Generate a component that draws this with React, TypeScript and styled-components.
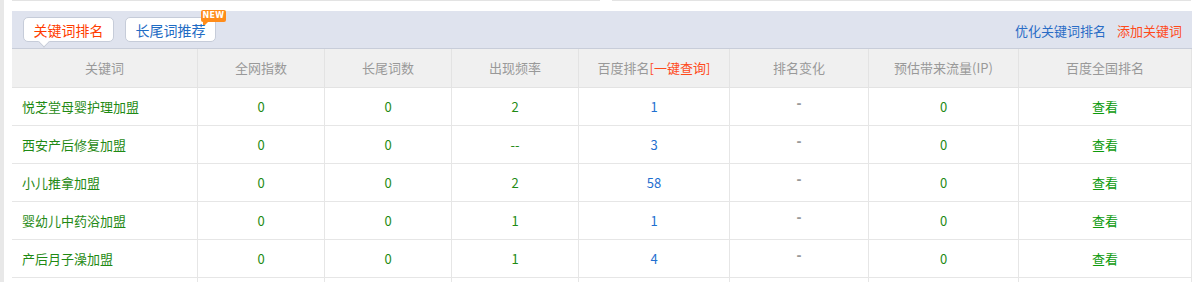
import React from "react";
import styled, { createGlobalStyle } from "styled-components";

const Global = createGlobalStyle`
  html, body { margin: 0; padding: 0; background: #fff; }
  body { font-family: "Noto Sans CJK SC", "Noto Sans", sans-serif; font-size: 13px; }
`;

const Page = styled.div`
  display: flex;
  height: 282px;
  overflow: hidden;
`;

const SideStripe = styled.div`
  width: 4px;
  background: #e8e8e8;
  flex: none;
`;

const Main = styled.div`
  padding-left: 8px;
  width: 1180px;
`;

const TopLines = styled.div`
  display: flex;
  gap: 12px;
  height: 1px;
  margin-bottom: 10px;
`;

const TopLine = styled.div<{ $w: number }>`
  width: ${(p) => p.$w}px;
  background: #e3e3e3;
`;

const Panel = styled.div`
  width: 1180px;
`;

const Bar = styled.div`
  background: #dfe3ee;
  border-bottom: 1px solid #c8cdd9;
  display: flex;
  align-items: flex-start;
  justify-content: space-between;
  padding: 6px 10px 0 11px;
  height: 31px;
`;

const Tabs = styled.div`
  display: flex;
  gap: 11px;
`;

const Tab = styled.div<{ $active?: boolean }>`
  position: relative;
  width: 91px;
  height: 25px;
  box-sizing: border-box;
  background: #fff;
  border: 1px solid #c6ccd9;
  border-radius: 5px;
  display: flex;
  align-items: center;
  justify-content: center;
  font-size: 14px;
  color: ${(p) => (p.$active ? "#ff3c00" : "#1f6cc4")};
  ${(p) =>
    p.$active &&
    `
    &::after {
      content: "";
      position: absolute;
      left: 16px;
      bottom: -5px;
      width: 7px;
      height: 7px;
      background: #fff;
      border-right: 1px solid #c6ccd9;
      border-bottom: 1px solid #c6ccd9;
      transform: rotate(45deg);
    }
  `}
`;

const NewBadge = styled.span`
  position: absolute;
  left: 75px;
  top: -8px;
  width: 25px;
  height: 12px;
  background: #ff8c1a;
  border-radius: 2px;
  color: #fff;
  font-family: "DejaVu Sans", sans-serif;
  font-weight: bold;
  font-size: 8px;
  line-height: 12px;
  text-align: center;
  letter-spacing: 0.3px;
  &::after {
    content: "";
    position: absolute;
    left: 2px;
    bottom: -3px;
    border-left: 2px solid #ff8c1a;
    border-right: 3px solid transparent;
    border-top: 3px solid #ff8c1a;
  }
`;

const Links = styled.div`
  display: flex;
  gap: 11px;
  padding-top: 4px;
  font-size: 13px;
`;

const Link = styled.a<{ $red?: boolean }>`
  color: ${(p) => (p.$red ? "#ff4a1a" : "#2a6cc6")};
  text-decoration: none;
`;

const cols = "186px 127px 127px 127px 151px 139px 150px 173px";

const HeadRow = styled.div`
  display: grid;
  grid-template-columns: ${cols};
  height: 39px;
  background: #f0f0f0;
`;

const HeadCell = styled.div`
  border-right: 1px solid #e3e3e3;
  border-bottom: 1px solid #e3e3e3;
  display: flex;
  align-items: center;
  justify-content: center;
  color: #999;
  font-size: 13px;
  padding-bottom: 1px;
`;

const Hot = styled.span`
  color: #ff4a1a;
`;

const Row = styled.div`
  display: grid;
  grid-template-columns: ${cols};
  height: 38px;
`;

type Tone = "green" | "blue" | "gray" | "link";

const toneColor: Record<Tone, string> = {
  green: "#1f8a14",
  blue: "#1f6fd0",
  gray: "#999",
  link: "#0b9a0b",
};

const Cell = styled.div<{ $tone: Tone; $left?: boolean; $raise?: boolean }>`
  border-right: 1px solid #e6e6e6;
  border-bottom: 1px solid #e6e6e6;
  display: flex;
  align-items: center;
  justify-content: ${(p) => (p.$left ? "flex-start" : "center")};
  padding-left: ${(p) => (p.$left ? "10px" : "0")};
  padding-bottom: ${(p) => (p.$raise ? "5px" : "0")};
  color: ${(p) => toneColor[p.$tone]};
  font-size: 13px;
  ${(p) => (p.$raise ? `font-family: "DejaVu Sans", sans-serif; font-weight: bold; font-size: 12px;` : "")}
`;

const rows = [
  { k: "悦芝堂母婴护理加盟", f: "2", r: "1" },
  { k: "西安产后修复加盟", f: "--", r: "3" },
  { k: "小儿推拿加盟", f: "2", r: "58" },
  { k: "婴幼儿中药浴加盟", f: "1", r: "1" },
  { k: "产后月子澡加盟", f: "1", r: "4" },
];

const heads = ["关键词", "全网指数", "长尾词数", "出现频率", null, "排名变化", "预估带来流量(IP)", "百度全国排名"];

export default function App() {
  return (
    <>
      <Global />
      <Page>
        <SideStripe />
        <Main>
          <TopLines>
            <TopLine $w={588} />
            <TopLine $w={579} />
          </TopLines>
          <Panel>
            <Bar>
              <Tabs>
                <Tab $active>关键词排名</Tab>
                <Tab>
                  长尾词推荐
                  <NewBadge>NEW</NewBadge>
                </Tab>
              </Tabs>
              <Links>
                <Link>优化关键词排名</Link>
                <Link $red>添加关键词</Link>
              </Links>
            </Bar>
            <HeadRow>
              {heads.map((h, i) => (
                <HeadCell key={i}>
                  {h ?? (
                    <>
                      百度排名<Hot>[一键查询]</Hot>
                    </>
                  )}
                </HeadCell>
              ))}
            </HeadRow>
            {rows.map((r, i) => (
              <Row key={i}>
                <Cell $tone="green" $left>{r.k}</Cell>
                <Cell $tone="green">0</Cell>
                <Cell $tone="green">0</Cell>
                <Cell $tone="green">{r.f}</Cell>
                <Cell $tone="blue">{r.r}</Cell>
                <Cell $tone="gray" $raise>-</Cell>
                <Cell $tone="green">0</Cell>
                <Cell $tone="link">查看</Cell>
              </Row>
            ))}
            <Row>
              {Array.from({ length: 8 }).map((_, i) => (
                <Cell key={i} $tone="green" />
              ))}
            </Row>
          </Panel>
        </Main>
      </Page>
    </>
  );
}
